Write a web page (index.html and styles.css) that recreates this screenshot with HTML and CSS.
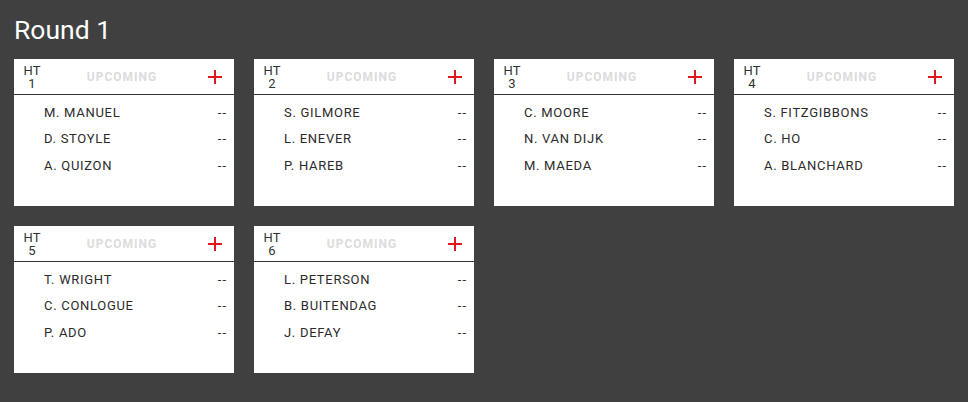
FILE: index.html
```html
<!DOCTYPE html>
<html>
<head>
<meta charset="utf-8">
<link rel="stylesheet" href="styles.css">
</head>
<body>
<div class="page">
  <h1 class="title">Round 1</h1>
  <div class="grid">
    <div class="card">
      <div class="card-head"><div class="ht">HT<br>1</div><div class="status">UPCOMING</div><div class="add"><svg width="14" height="14" viewBox="0 0 14 14"><path d="M7 0v14M0 7h14" stroke="#e0191f" stroke-width="2"/></svg></div></div>
      <div class="card-body">
        <div class="row"><span class="name">M. MANUEL</span><span class="score">--</span></div>
        <div class="row"><span class="name">D. STOYLE</span><span class="score">--</span></div>
        <div class="row"><span class="name">A. QUIZON</span><span class="score">--</span></div>
      </div>
    </div>
    <div class="card">
      <div class="card-head"><div class="ht">HT<br>2</div><div class="status">UPCOMING</div><div class="add"><svg width="14" height="14" viewBox="0 0 14 14"><path d="M7 0v14M0 7h14" stroke="#e0191f" stroke-width="2"/></svg></div></div>
      <div class="card-body">
        <div class="row"><span class="name">S. GILMORE</span><span class="score">--</span></div>
        <div class="row"><span class="name">L. ENEVER</span><span class="score">--</span></div>
        <div class="row"><span class="name">P. HAREB</span><span class="score">--</span></div>
      </div>
    </div>
    <div class="card">
      <div class="card-head"><div class="ht">HT<br>3</div><div class="status">UPCOMING</div><div class="add"><svg width="14" height="14" viewBox="0 0 14 14"><path d="M7 0v14M0 7h14" stroke="#e0191f" stroke-width="2"/></svg></div></div>
      <div class="card-body">
        <div class="row"><span class="name">C. MOORE</span><span class="score">--</span></div>
        <div class="row"><span class="name">N. VAN DIJK</span><span class="score">--</span></div>
        <div class="row"><span class="name">M. MAEDA</span><span class="score">--</span></div>
      </div>
    </div>
    <div class="card">
      <div class="card-head"><div class="ht">HT<br>4</div><div class="status">UPCOMING</div><div class="add"><svg width="14" height="14" viewBox="0 0 14 14"><path d="M7 0v14M0 7h14" stroke="#e0191f" stroke-width="2"/></svg></div></div>
      <div class="card-body">
        <div class="row"><span class="name">S. FITZGIBBONS</span><span class="score">--</span></div>
        <div class="row"><span class="name">C. HO</span><span class="score">--</span></div>
        <div class="row"><span class="name">A. BLANCHARD</span><span class="score">--</span></div>
      </div>
    </div>
    <div class="card">
      <div class="card-head"><div class="ht">HT<br>5</div><div class="status">UPCOMING</div><div class="add"><svg width="14" height="14" viewBox="0 0 14 14"><path d="M7 0v14M0 7h14" stroke="#e0191f" stroke-width="2"/></svg></div></div>
      <div class="card-body">
        <div class="row"><span class="name">T. WRIGHT</span><span class="score">--</span></div>
        <div class="row"><span class="name">C. CONLOGUE</span><span class="score">--</span></div>
        <div class="row"><span class="name">P. ADO</span><span class="score">--</span></div>
      </div>
    </div>
    <div class="card">
      <div class="card-head"><div class="ht">HT<br>6</div><div class="status">UPCOMING</div><div class="add"><svg width="14" height="14" viewBox="0 0 14 14"><path d="M7 0v14M0 7h14" stroke="#e0191f" stroke-width="2"/></svg></div></div>
      <div class="card-body">
        <div class="row"><span class="name">L. PETERSON</span><span class="score">--</span></div>
        <div class="row"><span class="name">B. BUITENDAG</span><span class="score">--</span></div>
        <div class="row"><span class="name">J. DEFAY</span><span class="score">--</span></div>
      </div>
    </div>
  </div>
</div>
</body>
</html>
```
FILE: styles.css
```css
html, body {
  margin: 0;
  padding: 0;
  background: #404040;
  font-family: Roboto, "Liberation Sans", sans-serif;
}
.page {
  padding: 13px 14px;
}
.title {
  margin: 0 0 13px 0;
  color: #ffffff;
  font-size: 26.5px;
  font-weight: 400;
  line-height: 33px;
  height: 33px;
}
.grid {
  display: grid;
  grid-template-columns: repeat(4, 220px);
  column-gap: 20px;
  row-gap: 20px;
}
.card {
  background: #ffffff;
  height: 147px;
  display: flex;
  flex-direction: column;
}
.card-head {
  height: 35px;
  border-bottom: 1px solid #333333;
  display: flex;
  align-items: center;
  padding: 0 12px 0 9px;
}
.ht {
  font-size: 13px;
  line-height: 13.5px;
  color: #333333;
  text-align: center;
  width: 18px;
  margin-top: 1px;
}
.status {
  flex: 1;
  text-align: center;
  font-size: 12px;
  font-weight: 700;
  letter-spacing: 1px;
  color: #dcdcdc;
  margin-right: 5px;
  padding-top: 1px;
}
.add {
  width: 14px;
  height: 14px;
  display: flex;
  margin-top: 1px;
}
.card-body {
  padding: 4px 8px 0 30px;
}
.row {
  display: flex;
  justify-content: space-between;
  align-items: center;
  height: 26.5px;
  font-size: 13px;
  font-weight: 400;
  letter-spacing: 0.7px;
  color: #2b2b2b;
}
.score {
  letter-spacing: 1px;
  margin-right: -1px;
}
```
